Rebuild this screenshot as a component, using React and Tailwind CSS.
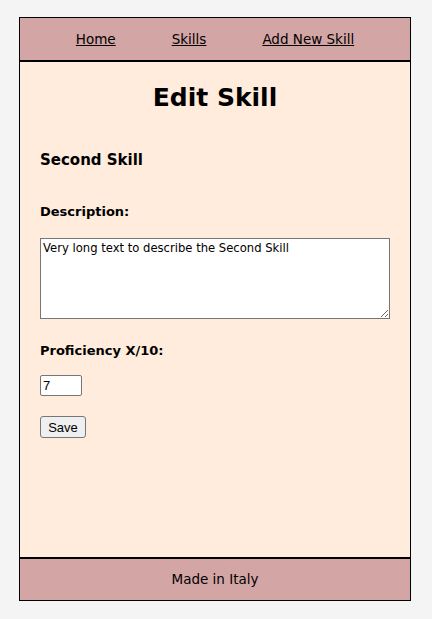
export default function App() {
  return (
    <div className="min-h-[619px] bg-[#f4f4f4] pt-[17px] pl-[19px]" style={{ fontFamily: '"DejaVu Sans", sans-serif' }}>
      <div className="border border-black flex flex-col w-[392px] h-[584px] bg-[#ffecdc]">
        <nav className="h-[44px] shrink-0 bg-[#d4a5a5] border-b-2 border-black flex items-center justify-center gap-[56px] text-[13.5px] text-black pt-[1px]">
          <a href="#" className="underline">Home</a>
          <a href="#" className="underline">Skills</a>
          <a href="#" className="underline">Add New Skill</a>
        </nav>
        <main className="flex-1 px-[20px]">
          <h1 className="text-[25px] font-bold text-center mt-[19px] leading-[34px]">Edit Skill</h1>
          <h3 className="text-[15px] font-bold mt-[35px] leading-[20px]">Second Skill</h3>
          <label className="block text-[13px] font-bold mt-[33px] leading-[18px]">Description:</label>
          <textarea
            className="block mt-[17px] w-[350px] h-[81px] bg-white border border-[#767676] text-[11.6px] px-[2px] py-[1px] resize-y"
            defaultValue="Very long text to describe the Second Skill"
          />
          <label className="block text-[13px] font-bold mt-[23px] leading-[18px]">Proficiency X/10:</label>
          <input
            type="text"
            defaultValue="7"
            className="block mt-[15px] w-[42px] h-[21px] bg-white border border-[#767676] rounded-[2px] text-[13px] px-[2px]"
            style={{ fontFamily: '"Liberation Sans", Arial, sans-serif' }}
          />
          <button
            className="block mt-[20px] w-[46px] h-[22px] bg-[#efefef] border border-[#767676] rounded-[3px] text-[13px] leading-none"
            style={{ fontFamily: '"Liberation Sans", Arial, sans-serif' }}
          >
            Save
          </button>
        </main>
        <footer className="h-[43px] shrink-0 bg-[#d4a5a5] border-t-2 border-black flex items-center justify-center text-[13.5px]">
          Made in Italy
        </footer>
      </div>
    </div>
  );
}
